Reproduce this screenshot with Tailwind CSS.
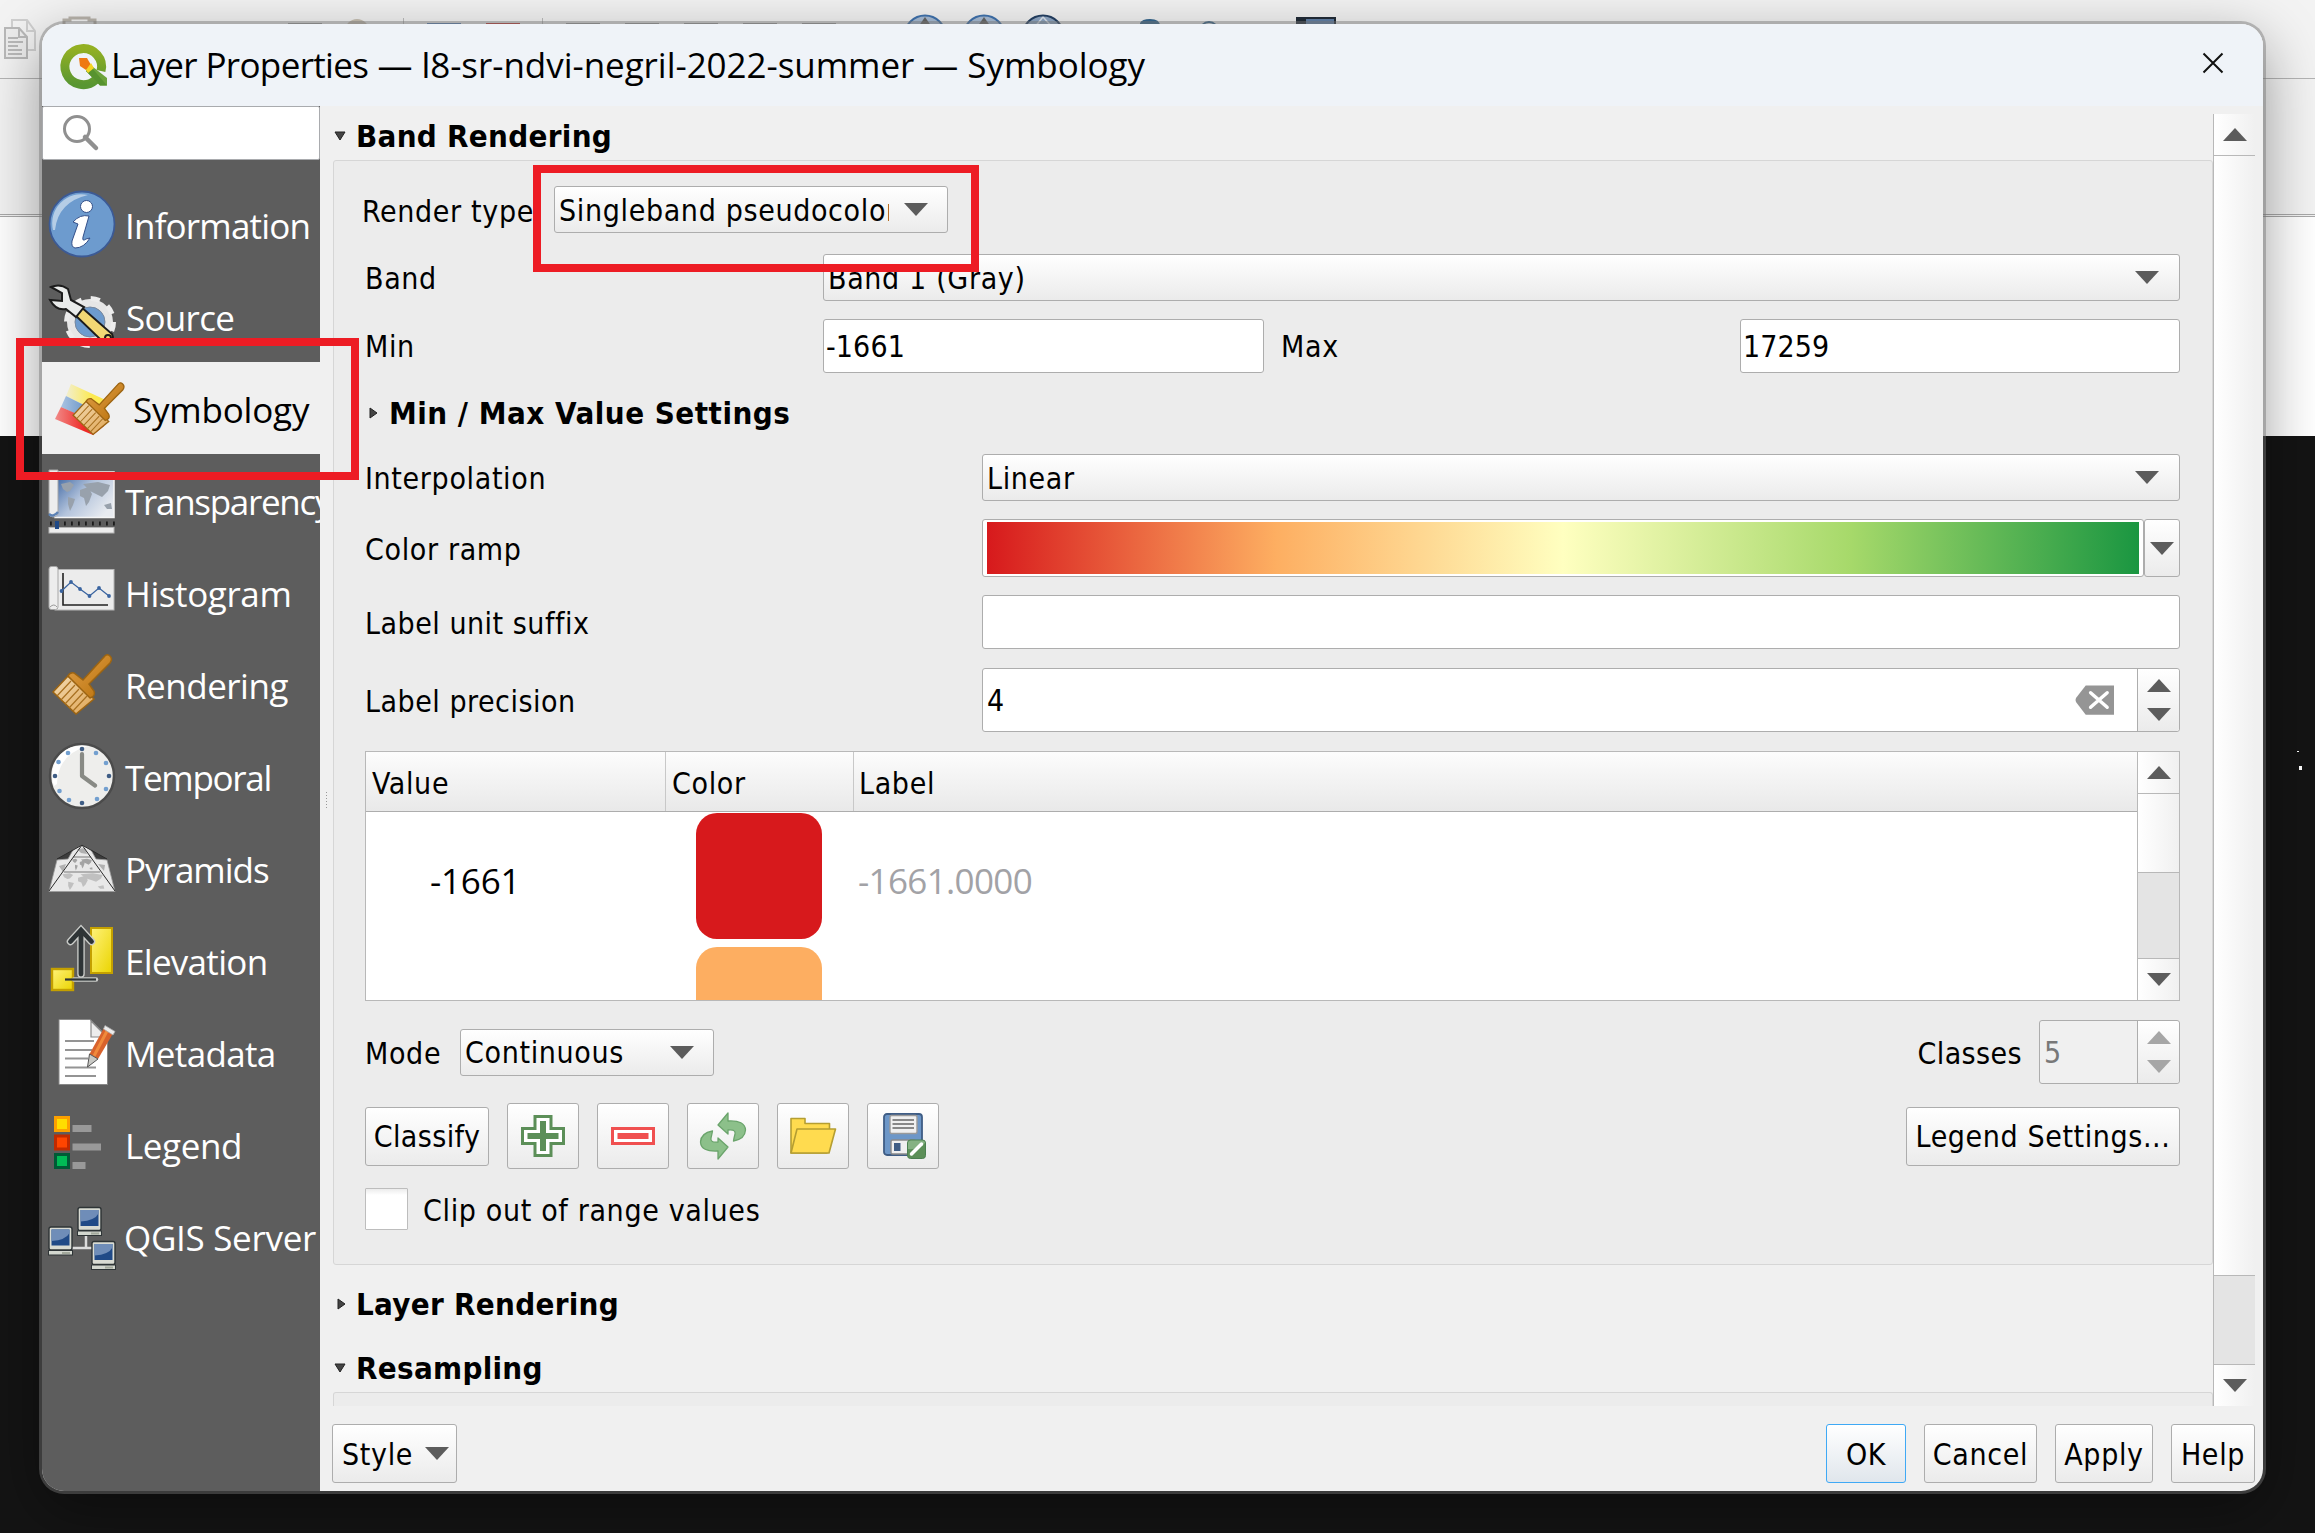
<!DOCTYPE html>
<html lang="en">
<head>
<meta charset="utf-8">
<title>Layer Properties</title>
<script src="https://cdn.jsdelivr.net/npm/@tailwindcss/browser@4"></script>
</head>
<body class="relative w-[2315px] h-[1533px] overflow-hidden bg-[#141414] font-['DejaVu_Sans_Condensed','DejaVu_Sans',sans-serif] text-[30px] leading-[36px] tracking-[0.65px] text-black">

<!-- shared symbols -->
<svg class="absolute size-0">
  <defs>
    <linearGradient id="wood" x1="0" y1="0" x2="1" y2="1"><stop offset="0" stop-color="#e0a04a"/><stop offset="1" stop-color="#b97008"/></linearGradient>
    <linearGradient id="bris" x1="0" y1="0" x2="1" y2="1"><stop offset="0" stop-color="#f3dcb4"/><stop offset="1" stop-color="#dfa452"/></linearGradient>
    <linearGradient id="yel" x1="0" y1="0" x2="1" y2="1"><stop offset="0" stop-color="#fff27a"/><stop offset="1" stop-color="#ead400"/></linearGradient>
    <linearGradient id="sea" x1="0" y1="0" x2="1" y2="0.7"><stop offset="0" stop-color="#2f5b9c"/><stop offset="0.55" stop-color="#b4c4dc"/><stop offset="1" stop-color="#e8ebf0"/></linearGradient>
    <linearGradient id="fadeY" x1="0" y1="0" x2="1" y2="0"><stop offset="0" stop-color="#fce94f" stop-opacity=".2"/><stop offset="0.6" stop-color="#fce94f"/></linearGradient>
    <linearGradient id="fadeB" x1="0" y1="0" x2="1" y2="0"><stop offset="0" stop-color="#a9c3e2"/><stop offset="0.6" stop-color="#6d97c8"/></linearGradient>
    <linearGradient id="fadeR" x1="0" y1="0" x2="1" y2="0"><stop offset="0" stop-color="#f18a88"/><stop offset="0.6" stop-color="#ee2a26"/></linearGradient>
    <linearGradient id="qg" x1="0" y1="0" x2="0" y2="1"><stop offset="0" stop-color="#93b023"/><stop offset="1" stop-color="#589632"/></linearGradient>
    <g id="brush">
      <path d="M7 44 L22 28 L48 51 L30 66 Z" fill="url(#bris)" stroke="#9c6412" stroke-width="1.5"/>
      <path d="M11 48 L25 33 M15 52 L29 37 M19 56 L33 41 M23 60 L37 45 M27 63 L41 48" stroke="#a87020" stroke-width="1.200"/>
      <path d="M22 28 Q24 24 28 25 L37 32 L58 9 Q61 5 64 8 Q67 11 64 15 L43 36 L48 43 Q50 48 44 50 Z" fill="url(#wood)" stroke="#9c6412" stroke-width="1.5"/>
    </g>
    <g id="pc">
      <rect x="1" y="1" width="23" height="23" rx="2" fill="#d9dbd3" stroke="#2e3436" stroke-width="1.400"/>
      <rect x="3.500" y="3.500" width="18" height="16" fill="#204a87"/>
      <path d="M3.500 3.500 H21.500 V7 Q18 14 3.500 15 Z" fill="#6f8db8"/>
      <rect x="0.500" y="24.500" width="24" height="4.500" fill="#d3d7cf" stroke="#2e3436" stroke-width="1"/>
      <rect x="14" y="26" width="8" height="2" fill="#a3a99c"/>
    </g>
    <g id="land">
      <path d="M3 4 L12 2 L16 5 L12 11 L9 12 L5 9 Z M10 17 L17 19 L15 25 L12 31 L10 24 Z M22 10 L30 7 L34 14 L31 22 L28 26 L26 18 L22 16 Z M25 4 L40 2 L52 5 L50 11 L44 17 L38 14 L32 11 Z M46 25 L53 23 L54 29 L49 29 Z"/>
    </g>
  </defs>
</svg>

<!-- main application behind the dialog -->
<div class="absolute inset-0 flex flex-col">
  <div class="h-[79px] shrink-0 bg-[#f3f3f3] border-b border-[#b4b4b4]">
    <svg width="2315" height="78" viewBox="0 0 2315 78" fill="none">
      <g stroke="#b9b9b9" stroke-width="2">
        <path d="M12 27 V20 H27 L35 31 V50 H28" stroke="#d0d0d0"/><path d="M27 20 V31 H35" stroke="#d0d0d0"/>
        <path d="M5 28 H19 L27 37 V58 H5 Z" fill="#ededed"/><path d="M19 28 V37 H27 M8 38 H18 M8 42 H23 M8 46 H18 M8 50 H22 M8 54 H22"/>
      </g>
      <path d="M64 24 V20 H70 V18 H89 V20 H95 V24" stroke="#b9b4ac" stroke-width="3"/>
      <circle cx="357" cy="31" r="12" fill="#c9c1b3"/>
      <path d="M403.500 18 V30 M542.500 18 V30" stroke="#bdbdbd"/>
      <rect x="288" y="23" width="34" height="6" fill="#9f9f9f"/><rect x="427" y="23" width="34" height="6" fill="#5b83b9"/><rect x="486" y="23" width="34" height="6" fill="#c63a36"/>
      <path d="M566 23.500 H600 M625 23.500 H659 M684 23.500 H718 M743 23.500 H777 M802 23.500 H836" stroke="#a0a0a0" stroke-width="1"/>
      <g><circle cx="925" cy="36" r="20.500" fill="#a9bdd6" stroke="#3f72ad" stroke-width="2"/><path d="M925 17 L916 30 H934 Z" fill="#666"/>
      <circle cx="984" cy="36" r="20.500" fill="#a9bdd6" stroke="#3f72ad" stroke-width="2"/><path d="M984 17 L975 30 H993 Z" fill="#666"/>
      <circle cx="1043" cy="36" r="20.500" fill="#8ea6c4" stroke="#233f62" stroke-width="2"/><path d="M1043 17 L1034 28 M1043 17 L1053 28" stroke="#dde5ee" stroke-width="1.500"/></g>
      <path d="M1140 28 V23 Q1142 19 1150 19 Q1160 19 1160 26 V28 Z" fill="#35678f"/>
      <circle cx="1209" cy="31" r="9" stroke="#35678f" stroke-width="2"/>
      <rect x="1297" y="18" width="38" height="12" fill="#6281a8" stroke="#222c38" stroke-width="2"/><rect x="1297" y="18" width="9" height="12" fill="#222c38"/>
    </svg>
  </div>
  <div class="h-[138px] shrink-0 bg-[#f3f3f3] border-b-3 border-double border-[#a8a8a8]"></div>
  <div class="h-[219px] shrink-0 bg-white"></div>
  <div class="relative flex-1 bg-[#141414]">
    <div class="absolute left-[2297px] top-[315px] w-[2px] h-px bg-white"></div>
    <div class="absolute left-[2299px] top-[330px] w-[3px] h-[4px] bg-white"></div>
  </div>
</div>

<!-- dialog -->
<div class="absolute left-[42px] top-[24px] w-[2221px] h-[1467px] rounded-[22px] shadow-[0_0_0_3px_rgba(117,117,117,0.45),0_18px_60px_rgba(0,0,0,0.4)]">
<div class="w-full h-full rounded-[22px] overflow-hidden bg-[#f0f0f0] flex flex-col">

  <div class="h-[82px] shrink-0 bg-[#eff3f8] flex items-center pl-[18px] pr-[39px]">
    <svg class="shrink-0 -mt-1 overflow-visible" width="48" height="48" viewBox="0 0 48 48">
      <path d="M35.500 41 A18.300 18 0 1 1 41 32" fill="none" stroke="url(#qg)" stroke-width="9"/>
      <path d="M28 24 L47 39 V46.500 H40 L26 32 Z" fill="#6ba33c"/><path d="M32 29 L47 46.500 H40 L26 32 Z" fill="#57932f"/><path d="M19 19 H27 L31 26 L26 31 L20 27 Z" fill="#ee7913"/><path d="M26 31 L31 24 L34 29 L28 34 Z" fill="#f4d524"/>
    </svg>
    <div class="ml-[3px] -mt-px font-['Open_Sans'] text-[35px] tracking-[-0.05px] whitespace-pre"><span class="tracking-[-0.65px]">Layer Properties</span> — l8-sr-ndvi-negril-2022-summer — Symbology</div>
    <svg class="ml-auto -mt-[5px]" width="22" height="22" viewBox="0 0 22 22"><path d="M1.500 1.500 L20.500 20.500 M20.500 1.500 L1.500 20.500" stroke="#111" stroke-width="2"/></svg>
  </div>

  <div class="flex flex-1 min-h-0">
    <!-- navigation -->
    <div class="w-[278px] shrink-0 bg-[#5d5d5d] overflow-hidden font-['Open_Sans'] text-[35px] tracking-[-0.4px] text-white whitespace-nowrap">
      <div class="h-[54px] bg-white border border-[#a9abae] rounded-[2px]">
        <svg class="ml-[19px] mt-[7px]" width="40" height="40" viewBox="0 0 40 40" fill="none" stroke="#909090"><circle cx="15" cy="15" r="12.500" stroke-width="3"/><path d="M23 23 L34 34" stroke-width="4.500" stroke-linecap="round"/></svg>
      </div>
      <div class="pt-[18px]">
        <div class="h-[92px] flex items-center pl-1">
          <svg class="shrink-0" width="72" height="72" viewBox="0 0 72 72"><circle cx="36" cy="36" r="32.500" fill="#6d9bce" stroke="#3c5a95" stroke-width="1.800"/><path d="M7 42 A29 29 0 0 1 42 7 Q12 14 9 42 Z" fill="#b5cde6"/><g fill="#fff" stroke="#33508a" stroke-width="1"><circle cx="40.500" cy="18.500" r="6"/><path d="M27 34 Q34 26 43 28 L37 49 Q36 54 40 51 L44 50 Q38 60 29 60 Q25 59 26 53 L32 36 Z"/></g></svg>
          <span class="ml-[7px] mt-1 tracking-[-0.8px]">Information</span>
        </div>
        <div class="h-[92px] flex items-center pl-1">
          <svg class="shrink-0" width="72" height="72" viewBox="0 0 72 72">
            <circle cx="44" cy="42" r="19" fill="none" stroke="#e6e6e6" stroke-width="8"/><circle cx="44" cy="42" r="23.500" fill="none" stroke="#ececec" stroke-width="5" stroke-dasharray="9.200 9.260"/><circle cx="44" cy="42" r="15" fill="#6d9bce" stroke="#7a8aa0" stroke-width="1"/>
            <path d="M34 26 L66 54 Q69 60 62 63 L55 60 L28 34 Z" fill="#f2d874" stroke="#1c1c1c" stroke-width="2"/>
            <path d="M5 7 Q14 3 22 9 L25 20 L38 27 L30 37 L20 29 Q10 31 4 20 L16 21 L16 13 Z" fill="#e9ebea" stroke="#1c1c1c" stroke-width="2"/><circle cx="62" cy="58" r="3" fill="#f2d874" stroke="#1c1c1c" stroke-width="2"/>
          </svg>
          <span class="ml-[8px] mt-1 tracking-[-0.7px]">Source</span>
        </div>
        <div class="h-[92px] flex items-center pl-3 bg-[#f0f0f0] text-black">
          <svg class="shrink-0" width="72" height="72" viewBox="0 0 72 72">
            <path d="M17 12 L56 30 L48 42 L12 24 Z" fill="url(#fadeY)"/><path d="M12 24 L48 42 L42 52 L7 35 Z" fill="url(#fadeB)"/><path d="M7 35 L50 54 L39 63 L1 47 Z" fill="url(#fadeR)"/>
            <use href="#brush" transform="translate(13 5) scale(0.87)"/>
          </svg>
          <span class="ml-[7px] mt-1 tracking-[-0.2px]">Symbology</span>
        </div>
        <div class="h-[92px] flex items-center pl-1">
          <svg class="shrink-0" width="72" height="72" viewBox="0 0 72 72">
            <rect x="9" y="8" width="59" height="45.500" fill="url(#sea)" stroke="#f4f4f4" stroke-width="1.500"/><use href="#land" transform="translate(12 16)" fill="#98a1ac"/>
            <path d="M3 6 H12 V48 Q12 53 7 53 Q3 53 3 49 Z" fill="#ededed" stroke="#a6a6a6"/><path d="M3 50 Q7 54 12 48" fill="none" stroke="#5d82b5" stroke-width="2.500"/>
            <path d="M4 59.500 H70" stroke="#1b1b1b" stroke-width="4" stroke-dasharray="1.800 5.200"/><rect x="3" y="63.500" width="65" height="5.500" fill="#ededed" stroke="#b5b5b5"/><rect x="9" y="57" width="4" height="8" fill="#204a87"/>
          </svg>
          <span class="ml-[7px] mt-1 tracking-[-1.300px]">Transparency</span>
        </div>
        <div class="h-[92px] flex items-center pl-1">
          <svg class="shrink-0" width="72" height="72" viewBox="0 0 72 72">
            <rect x="9" y="13.500" width="59" height="40.500" fill="#ececec" stroke="#b5b5b5"/><rect x="3" y="10.500" width="9" height="43" rx="2.500" fill="#ededed" stroke="#a6a6a6"/><path d="M4 51 Q8 47 11 51" fill="none" stroke="#999"/>
            <path d="M17 17 V49 H62" fill="none" stroke="#222" stroke-width="1.600"/>
            <path d="M15.500 35 L25 26 L34 33 L43.500 40 L53 32 L63 40" fill="none" stroke="#3a64a0" stroke-width="1.300"/><g fill="#3a64a0"><circle cx="15.500" cy="35" r="1.900"/><circle cx="25" cy="26" r="1.900"/><circle cx="34" cy="33" r="1.900"/><circle cx="43.500" cy="40" r="1.900"/><circle cx="53" cy="32" r="1.900"/><circle cx="63" cy="40" r="1.900"/></g>
          </svg>
          <span class="ml-[7px] mt-1">Histogram</span>
        </div>
        <div class="h-[92px] flex items-center pl-1">
          <svg class="shrink-0" width="72" height="72" viewBox="0 0 72 72"><use href="#brush"/></svg>
          <span class="ml-[7px] mt-1 tracking-[-0.5px]">Rendering</span>
        </div>
        <div class="h-[92px] flex items-center pl-1">
          <svg class="shrink-0" width="72" height="72" viewBox="0 0 72 72">
            <circle cx="36" cy="36" r="32" fill="#eeeeec" stroke="#4b4b4b" stroke-width="2.500"/><path d="M8 46 A30 30 0 0 1 42 6 Q12 14 11 44 Z" fill="#fff"/>
            <g fill="#3f5d85"><circle cx="36" cy="9" r="2.300"/><circle cx="63" cy="36" r="2.300"/><circle cx="36" cy="63" r="2.300"/><circle cx="9" cy="36" r="2.300"/></g>
            <g fill="#729fcf"><circle cx="50" cy="13" r="2.300"/><circle cx="60" cy="23" r="2.300"/><circle cx="60" cy="49" r="2.300"/><circle cx="51" cy="59" r="2.300"/><circle cx="23" cy="60" r="2.300"/><circle cx="13.500" cy="51" r="2.300"/><circle cx="12.500" cy="22" r="2.300"/><circle cx="22" cy="13" r="2.300"/></g>
            <path d="M36 14 V36 L49 45.500" fill="none" stroke="#888a85" stroke-width="4.200" stroke-linecap="round" stroke-linejoin="round"/>
          </svg>
          <span class="ml-[7px] mt-1 tracking-[-1.300px]">Temporal</span>
        </div>
        <div class="h-[92px] flex items-center pl-1">
          <svg class="shrink-0" width="72" height="72" viewBox="0 0 72 72">
            <path d="M11 27 L36 13 L61 27 Z" fill="#3c3c3c"/><path d="M11 28 L22 27 L27 18 L36 13 L45 18 L50 27 L61 28 L69 59.500 H3 Z" fill="#e8e8e8" stroke="#9a9a9a" stroke-width=".8"/>
            <use href="#land" transform="translate(14 40) scale(.82 .58)" fill="#c0c0c0"/><use href="#land" transform="translate(25 26) scale(.4 .4)" fill="#a4a4a4"/><path d="M31 17 L39 16 L41 22 L35 21 Z M13 34 L20 32 L17 40 Z M52 32 L59 33 L58 39 Z" fill="#b0b0b0"/>
            <path d="M18 40 H54 M27 25 H45" stroke="#b0b0b0" stroke-width="2"/><path d="M36 13 L3 59 M36 13 L69 59 M11 27 L36 13 L61 27" fill="none" stroke="#2b2b2b" stroke-width="1"/>
          </svg>
          <span class="ml-[7px] mt-1 tracking-[-1px]">Pyramids</span>
        </div>
        <div class="h-[92px] flex items-center pl-1">
          <svg class="shrink-0" width="72" height="72" viewBox="0 0 72 72">
            <rect x="45" y="4" width="21" height="45" fill="url(#yel)" stroke="#c4a000" stroke-width="2"/><rect x="6" y="45" width="21" height="21" fill="url(#yel)" stroke="#c4a000" stroke-width="2.400"/>
            <path d="M35 50 V8 M24.500 17.500 L35 6 L45.500 17.500" fill="none" stroke="#c9cbc8" stroke-width="7.500" stroke-linecap="round"/><path d="M35 50 V8 M24.500 17.500 L35 6 L45.500 17.500" fill="none" stroke="#2e3436" stroke-width="4.800" stroke-linecap="round"/>
            <path d="M28 55.500 H50" stroke="#c9cbc8" stroke-width="4.500" stroke-linecap="round"/><path d="M19 55.500 H50" stroke="#2e3436" stroke-width="2.200"/>
          </svg>
          <span class="ml-[7px] mt-1 tracking-[-0.7px]">Elevation</span>
        </div>
        <div class="h-[92px] flex items-center pl-1">
          <svg class="shrink-0" width="72" height="72" viewBox="0 0 72 72">
            <path d="M13 3.500 H44 L61.500 21 V68.500 H13 Z" fill="#fff" stroke="#888" stroke-width="1"/><path d="M45 5 V21 H61 Z" fill="#ededed" stroke="#888" stroke-width="1.200"/>
            <path d="M19 25 H48 M19 34 H46 M19 42.500 H42 M19 51.500 H50 M19 60 H50" stroke="#949494" stroke-width="2.200"/>
            <path d="M58 12 L67 17.500 L52 43 L43.500 38 Z" fill="#d8622c"/><path d="M61 15 L48 40" stroke="#f08a3c" stroke-width="3"/><path d="M43.500 38 L52 43 L41.500 51 Z" fill="#c9c9c5" stroke="#555" stroke-width="1"/><path d="M59 9.500 L69 15.500 L67 19 L57.500 13 Z" fill="#ececec" stroke="#aaa" stroke-width=".8"/>
          </svg>
          <span class="ml-[7px] mt-1 tracking-[-0.65px]">Metadata</span>
        </div>
        <div class="h-[92px] flex items-center pl-1">
          <svg class="shrink-0" width="72" height="72" viewBox="0 0 72 72">
            <rect x="9.500" y="9.500" width="13" height="13" fill="#fd0" stroke="#fca000" stroke-width="3"/><rect x="9.500" y="28" width="13" height="13" fill="#ff4500" stroke="#c02a00" stroke-width="3"/><rect x="9.500" y="46.500" width="13" height="13" fill="#00bb55" stroke="#005a36" stroke-width="3"/>
            <g fill="#999"><rect x="26.500" y="17" width="19" height="7"/><rect x="26.500" y="35.500" width="28.500" height="7"/><rect x="26.500" y="54" width="13" height="7"/></g>
          </svg>
          <span class="ml-[7px] mt-1">Legend</span>
        </div>
        <div class="h-[92px] flex items-center pl-1">
          <svg class="shrink-0" width="72" height="72" viewBox="0 0 72 72"><path d="M40 34 V48 M26 48 H46" stroke="#dcdcdc" stroke-width="2.500"/><use href="#pc" x="31" y="6.500"/><use href="#pc" x="2" y="26"/><use href="#pc" x="45" y="40.500"/></svg>
          <span class="ml-[6px] mt-1 tracking-[-0.3px]">QGIS Server</span>
        </div>
      </div>
    </div>

    <!-- splitter handle -->
    <div class="w-[13px] shrink-0 flex flex-col items-center pt-[686px] gap-[2px]">
      <i class="size-px bg-[#999]"></i><i class="size-px bg-[#999]"></i><i class="size-px bg-[#999]"></i><i class="size-px bg-[#999]"></i><i class="size-px bg-[#999]"></i><i class="size-px bg-[#999]"></i>
    </div>

    <!-- right side -->
    <div class="flex-1 min-w-0 flex flex-col pt-2 pr-2">
      <div class="h-[1292px] shrink-0 flex">
        <div class="w-[1880px] overflow-hidden flex flex-col">
          <div class="h-[46px] shrink-0 flex items-center pl-px pb-[2px] font-bold text-[31px] tracking-[0.3px]">
            <svg width="12" height="10" viewBox="0 0 12 10"><path d="M1 1 H11 L6 9 Z" fill="#444" stroke="#222"/></svg>
            <span class="ml-[10px]">Band Rendering</span>
          </div>
          <div class="h-[1105px] shrink-0 border border-[#d6d6d6] rounded-[3px] bg-[#ececec] pl-[31px] pr-[32px] flex flex-col whitespace-nowrap">
            <div class="mt-[25px] h-[47px] flex items-center">
              <span class="w-[189px] -ml-[3px] mr-[3px] mt-[4px]">Render type</span>
              <div class="w-[394px] h-[47px] border border-[#adadad] rounded-[3px] bg-linear-to-b from-white to-[#ebebeb] flex items-center justify-between pl-[4px] pr-[19px]"><span class="w-[330px] overflow-hidden mt-[2px]">Singleband pseudocolor</span><svg width="24" height="13" viewBox="0 0 24 13"><path d="M0 0 H24 L12 13 Z" fill="#5c5c5c"/></svg></div>
            </div>
            <div class="mt-[21px] h-[47px] flex items-center">
              <span class="w-[458px] mt-[2px]">Band</span>
              <div class="flex-1 h-[47px] border border-[#adadad] rounded-[3px] bg-linear-to-b from-white to-[#ebebeb] flex items-center justify-between pl-[4px] pr-[20px]"><span class="mt-[2px]">Band 1 (Gray)</span><svg width="24" height="13" viewBox="0 0 24 13"><path d="M0 0 H24 L12 13 Z" fill="#5c5c5c"/></svg></div>
            </div>
            <div class="mt-[18px] h-[54px] flex items-center">
              <span class="w-[458px] mt-[2px]">Min</span>
              <div class="w-[441px] h-[54px] border border-[#adadad] rounded-[3px] bg-white flex items-center pl-[2px] tracking-[0.1px]"><span class="mt-[2px]">-1661</span></div>
              <span class="ml-[17px] mt-[2px]">Max</span>
              <div class="ml-auto w-[440px] h-[54px] border border-[#adadad] rounded-[3px] bg-white flex items-center pl-[2px] tracking-[0.1px]"><span class="mt-[2px]">17259</span></div>
            </div>
            <div class="h-[81px] flex items-center pl-[4px] pb-[2px] font-bold text-[31px] tracking-[0.5px]">
              <svg width="9" height="12" viewBox="0 0 9 12"><path d="M1 1 V11 L8 6 Z" fill="#444" stroke="#222"/></svg>
              <span class="ml-[11px]">Min / Max Value Settings</span>
            </div>
            <div class="h-[47px] flex items-center">
              <span class="w-[617px] mt-[2px]">Interpolation</span>
              <div class="flex-1 h-[47px] border border-[#adadad] rounded-[3px] bg-linear-to-b from-white to-[#ebebeb] flex items-center justify-between pl-[4px] pr-[20px]"><span class="mt-[2px]">Linear</span><svg width="24" height="13" viewBox="0 0 24 13"><path d="M0 0 H24 L12 13 Z" fill="#5c5c5c"/></svg></div>
            </div>
            <div class="mt-[18px] h-[58px] flex items-center">
              <span class="w-[617px] mt-[4px]">Color ramp</span>
              <div class="flex-1 h-[58px] border border-[#adadad] rounded-[3px] bg-white pt-[2px] pb-[2px] pl-[4px] pr-[4px]"><div class="h-full bg-[linear-gradient(to_right,#d7191c_0%,#fdae61_25%,#ffffc0_50%,#a6d96a_75%,#1a9641_100%)]"></div></div>
              <div class="w-[36px] h-[58px] border border-[#adadad] rounded-[3px] bg-linear-to-b from-white to-[#ebebeb] flex items-center justify-center"><svg width="24" height="13" viewBox="0 0 24 13"><path d="M0 0 H24 L12 13 Z" fill="#5c5c5c"/></svg></div>
            </div>
            <div class="mt-[18px] h-[54px] flex items-center">
              <span class="w-[617px] mt-[4px] tracking-[0.5px]">Label unit suffix</span>
              <div class="flex-1 h-[54px] border border-[#adadad] rounded-[3px] bg-white"></div>
            </div>
            <div class="mt-[19px] h-[64px] flex items-center">
              <span class="w-[617px] mt-[4px] tracking-[0.5px]">Label precision</span>
              <div class="flex-1 h-[64px] border border-[#adadad] rounded-[3px] bg-white flex items-center pl-[4px]">
                <span class="mt-[2px]">4</span>
                <svg class="ml-auto mr-[23px]" width="39" height="30" viewBox="0 0 40 30"><path d="M11 0 H40 V30 H11 L1 17 Q0 15 1 13 Z" fill="#959595"/><path d="M16 7.500 L33 22.500 M33 7.500 L16 22.500" stroke="#fff" stroke-width="3.500" stroke-linecap="round"/></svg>
                <div class="w-[42px] h-full border-l border-[#adadad] bg-linear-to-b from-white to-[#ebebeb] rounded-r-[3px] flex flex-col items-center justify-center gap-[16px]"><svg width="24" height="13" viewBox="0 0 24 13"><path d="M0 13 H24 L12 0 Z" fill="#5c5c5c"/></svg><svg width="24" height="13" viewBox="0 0 24 13"><path d="M0 0 H24 L12 13 Z" fill="#5c5c5c"/></svg></div>
              </div>
            </div>
            <!-- colour table -->
            <div class="mt-[19px] h-[250px] border border-[#b8b8b8] bg-white flex overflow-hidden">
              <div class="flex-1 flex flex-col">
                <div class="h-[60px] shrink-0 border-b border-[#adadad] bg-linear-to-b from-[#fcfcfc] to-[#e9e9e9] flex">
                  <div class="w-[300px] border-r border-[#c8c8c8] pl-[6px] pt-[14px]">Value</div>
                  <div class="w-[188px] border-r border-[#c8c8c8] pl-[6px] pt-[14px]">Color</div>
                  <div class="pl-[5px] pt-[14px]">Label</div>
                </div>
                <div class="h-[134px] shrink-0 flex items-center font-['Open_Sans'] text-[35px] tracking-[-0.65px]">
                  <div class="w-[300px] pl-[64px] pt-[3px] tracking-[-0.2px]">-1661</div>
                  <div class="w-[188px] pl-[30px] self-start pt-px"><div class="size-[126px] rounded-[21px] bg-[#d7191c]"></div></div>
                  <div class="pl-[4px] pt-[3px] text-[#a2a2a6]">-1661.0000</div>
                </div>
                <div class="h-[134px] shrink-0 pl-[330px] pt-px"><div class="size-[126px] rounded-[21px] bg-[#fdae61]"></div></div>
              </div>
              <div class="w-[42px] border-l border-[#b8b8b8] flex flex-col">
                <div class="h-[42px] border-b border-[#b8b8b8] bg-linear-to-r from-white to-[#f0f0f0] flex items-center justify-center"><svg width="24" height="13" viewBox="0 0 24 13"><path d="M0 13 H24 L12 0 Z" fill="#5c5c5c"/></svg></div>
                <div class="h-[79px] border-b border-[#b8b8b8] bg-linear-to-r from-white to-[#f0f0f0]"></div>
                <div class="flex-1 bg-[#e4e4e4]"></div>
                <div class="h-[42px] border-t border-[#b8b8b8] bg-linear-to-r from-white to-[#f0f0f0] flex items-center justify-center"><svg width="24" height="13" viewBox="0 0 24 13"><path d="M0 0 H24 L12 13 Z" fill="#5c5c5c"/></svg></div>
              </div>
            </div>
            <div class="mt-[19px] h-[64px] flex items-center">
              <span class="mt-[4px] w-[95px]">Mode</span>
              <div class="w-[254px] h-[47px] border border-[#adadad] rounded-[3px] bg-linear-to-b from-white to-[#ebebeb] flex items-center justify-between pl-[4px] pr-[19px]"><span class="mt-[2px]">Continuous</span><svg width="24" height="13" viewBox="0 0 24 13"><path d="M0 0 H24 L12 13 Z" fill="#5c5c5c"/></svg></div>
              <span class="ml-auto mr-[17px] mt-[4px] tracking-[0.4px]">Classes</span>
              <div class="w-[141px] h-[64px] border border-[#adadad] rounded-[3px] bg-[#f0f0f0] flex items-center pl-[4px] text-[#787878]">
                <span class="mt-[2px]">5</span>
                <div class="ml-auto w-[42px] h-full border-l border-[#adadad] bg-linear-to-b from-white to-[#ebebeb] rounded-r-[3px] flex flex-col items-center justify-center gap-[16px]"><svg width="24" height="13" viewBox="0 0 24 13"><path d="M0 13 H24 L12 0 Z" fill="#a6a6a6"/></svg><svg width="24" height="13" viewBox="0 0 24 13"><path d="M0 0 H24 L12 13 Z" fill="#a6a6a6"/></svg></div>
              </div>
            </div>
            <div class="mt-[19px] h-[66px] flex items-center gap-[18px]">
              <div class="w-[124px] h-[59px] border border-[#adadad] rounded-[3px] bg-linear-to-b from-white to-[#ebebeb] flex items-center justify-center pt-[2px] tracking-[0.4px]">Classify</div>
              <div class="w-[72px] h-[66px] border border-[#adadad] rounded-[3px] bg-linear-to-b from-white to-[#ebebeb] flex items-center justify-center">
                <svg width="44" height="42" viewBox="0 0 44 42"><path d="M14 1.500 H30 V13.500 H42.500 V28.500 H30 V40.500 H14 V28.500 H1.500 V13.500 H14 Z" fill="#fff" stroke="#5c8f58" stroke-width="3"/><path d="M22 6 V36 M6.500 21 H37.500" stroke="#5c8f58" stroke-width="6"/></svg></div>
              <div class="w-[72px] h-[66px] border border-[#adadad] rounded-[3px] bg-linear-to-b from-white to-[#ebebeb] flex items-center justify-center">
                <svg width="44" height="18" viewBox="0 0 44 18"><rect x="1.500" y="1.500" width="41" height="15" fill="#fff" stroke="#f05050" stroke-width="3"/><rect x="6.500" y="6" width="31" height="6" fill="#f05050"/></svg></div>
              <div class="w-[72px] h-[66px] border border-[#adadad] rounded-[3px] bg-linear-to-b from-white to-[#ebebeb] flex items-center justify-center">
                <svg width="50" height="48" viewBox="0 0 50 48" fill="#8cc08a" stroke="#6aa46b" stroke-width="1.300" stroke-linejoin="round"><path d="M30 1 L20 13 L30 22 V18 Q38 17 37 22 Q36 26 35.500 29 Q47 27 47.500 18 Q47 8 30 9 Z"/><path d="M20 47 L30 35 L20 26 V30 Q12 31 13 26 Q14 22 14.500 19 Q3 21 2.500 30 Q3 40 20 39 Z"/></svg></div>
              <div class="w-[72px] h-[66px] border border-[#adadad] rounded-[3px] bg-linear-to-b from-white to-[#ebebeb] flex items-center justify-center">
                <svg width="48" height="38" viewBox="0 0 48 38" fill="#ffdb4f" stroke="#b59e32" stroke-width="1.600" stroke-linejoin="round"><path d="M2 36 V1.500 H16 V6.500 H40.500 V13 L38 36 Z"/><path d="M2 36 L8 12 H46.500 L40 36 Z"/></svg></div>
              <div class="w-[72px] h-[66px] border border-[#adadad] rounded-[3px] bg-linear-to-b from-white to-[#ebebeb] flex items-center justify-center">
                <svg class="ml-[3px]" width="46" height="48" viewBox="0 0 46 48"><rect x="2" y="2" width="38" height="41" rx="3" fill="#6d97c8" stroke="#3f5d85" stroke-width="1.800"/><rect x="8" y="3.500" width="27" height="18" rx="1.500" fill="#f0f0f0" stroke="#9a9a9a" stroke-width="1.400"/><path d="M10.500 8 H32 M10.500 12 H32 M10.500 16 H32" stroke="#666" stroke-width="1.500"/><rect x="9" y="28" width="24" height="14" rx="1.500" fill="#efefef" stroke="#8a8a8a" stroke-width="1.400"/><rect x="12" y="31" width="6.500" height="8" fill="#3f5d85"/><rect x="25.500" y="28" width="18" height="18.500" rx="3" fill="#5c8f58" stroke="#4b8050"/><path d="M26 37 V31 Q26 28.500 29 28.500 H40 Q43 28.500 43 31 Q36 38 26 37 Z" fill="#86b283"/><path d="M29.500 42 L39.500 32" stroke="#fff" stroke-width="3.500" stroke-linecap="round"/></svg></div>
              <div class="ml-auto w-[274px] h-[59px] border border-[#adadad] rounded-[3px] bg-linear-to-b from-white to-[#ebebeb] flex items-center justify-center pt-[2px] tracking-[0.6px]">Legend Settings...</div>
            </div>
            <div class="mt-[19px] h-[42px] flex items-center">
              <div class="w-[43px] h-[42px] border border-[#bdbdbd] rounded-[1px] bg-white bg-linear-to-b from-[#ececec] to-white to-15%"></div>
              <span class="ml-[15px] mt-[3px]">Clip out of range values</span>
            </div>
          </div>
          <div class="mt-[9px] h-[63px] shrink-0 flex items-center pl-[4px] pb-[3px] font-bold text-[31px] tracking-[0.3px]">
            <svg width="9" height="12" viewBox="0 0 9 12"><path d="M1 1 V11 L8 6 Z" fill="#444" stroke="#222"/></svg>
            <span class="ml-[10px]">Layer Rendering</span>
          </div>
          <div class="h-[55px] pt-[6px] shrink-0 flex items-center pl-px font-bold text-[31px] tracking-[0.3px]">
            <svg width="12" height="10" viewBox="0 0 12 10"><path d="M1 1 H11 L6 9 Z" fill="#444" stroke="#222"/></svg>
            <span class="ml-[10px]">Resampling</span>
          </div>
          <div class="flex-1 border border-b-0 border-[#d6d6d6] rounded-t-[3px] bg-[#ececec]"></div>
        </div>
        <div class="w-[42px] border-l border-[#b8b8b8] flex flex-col">
          <div class="h-[42px] border-b border-[#b8b8b8] bg-linear-to-r from-white to-[#f0f0f0] flex items-center justify-center"><svg width="24" height="13" viewBox="0 0 24 13"><path d="M0 13 H24 L12 0 Z" fill="#5c5c5c"/></svg></div>
          <div class="h-[1120px] border-b border-[#b8b8b8] bg-linear-to-r from-white to-[#f0f0f0]"></div>
          <div class="flex-1 bg-[#e4e4e4]"></div>
          <div class="h-[42px] border-t border-[#b8b8b8] bg-linear-to-r from-white to-[#f0f0f0] flex items-center justify-center"><svg width="24" height="13" viewBox="0 0 24 13"><path d="M0 0 H24 L12 13 Z" fill="#5c5c5c"/></svg></div>
        </div>
      </div>

      <div class="mt-[18px] flex items-center gap-[18px]">
        <div class="-ml-px mr-auto w-[125px] h-[59px] border border-[#adadad] rounded-[3px] bg-linear-to-b from-white to-[#ebebeb] flex items-center justify-between pl-[9px] pr-[7px]"><span class="mt-[2px]">Style</span><svg width="24" height="13" viewBox="0 0 24 13"><path d="M0 0 H24 L12 13 Z" fill="#5c5c5c"/></svg></div>
        <div class="w-[80px] h-[59px] border border-[#3fa9f5] rounded-[3px] bg-linear-to-b from-white to-[#e0e6ec] flex items-center justify-center pt-[2px]">OK</div>
        <div class="w-[113px] h-[59px] border border-[#adadad] rounded-[3px] bg-linear-to-b from-white to-[#ebebeb] flex items-center justify-center pt-[2px]">Cancel</div>
        <div class="w-[98px] h-[59px] border border-[#adadad] rounded-[3px] bg-linear-to-b from-white to-[#ebebeb] flex items-center justify-center pt-[2px]">Apply</div>
        <div class="w-[84px] h-[59px] border border-[#adadad] rounded-[3px] bg-linear-to-b from-white to-[#ebebeb] flex items-center justify-center pt-[2px]">Help</div>
      </div>
    </div>
  </div>
</div>
</div>

<!-- highlight frames -->
<div class="absolute left-[533px] top-[165px] w-[446px] h-[107px] border-8 border-[#ed1c24]"></div>
<div class="absolute left-[16px] top-[338px] w-[343px] h-[142px] border-8 border-[#ed1c24]"></div>
</body>
</html>
